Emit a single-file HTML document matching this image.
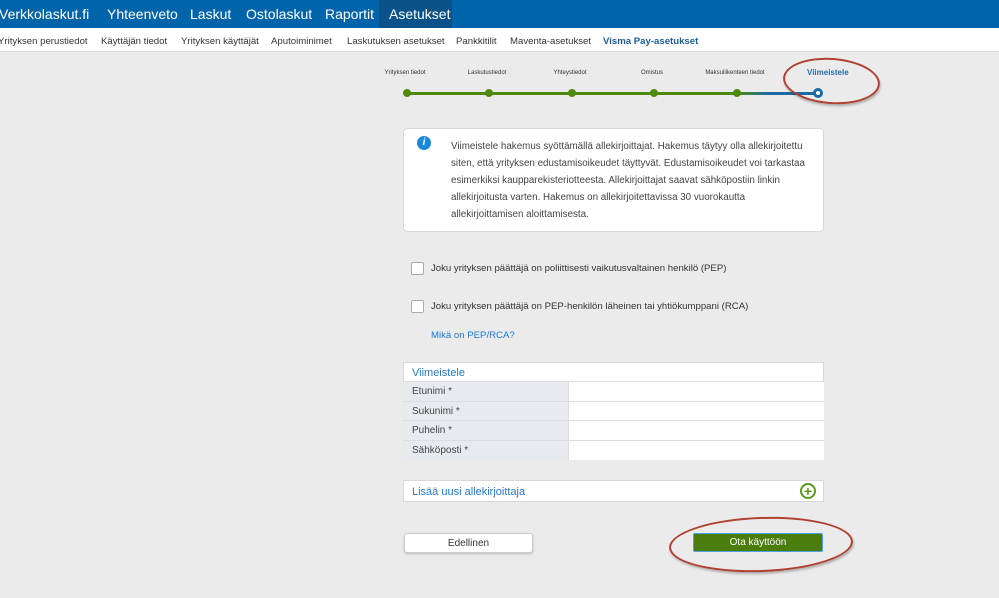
<!DOCTYPE html>
<html><head><meta charset="utf-8"><style>
*{box-sizing:border-box;margin:0;padding:0}
body{width:999px;height:598px;overflow:hidden;background:#ebebeb;font-family:"Liberation Sans",sans-serif;position:relative;color:#444}
.top{position:absolute;left:0;top:0;width:999px;height:28px;background:#0064aa}
.top span{position:absolute;top:6px;color:#fff;font-size:14px}
.act{position:absolute;left:379px;top:0;width:73px;height:28px;background:#0a5288}
.sub{position:absolute;left:0;top:28px;width:999px;height:24px;background:#fff;border-bottom:1px solid #ddd}
.sub span{position:absolute;top:8px;font-size:9.6px;color:#333;white-space:nowrap}
.lbl{position:absolute;top:70px;font-size:6px;color:#333;transform:translateX(-50%);white-space:nowrap}
.dot{position:absolute;top:89px;width:8px;height:8px;border-radius:50%;background:#4e8a0e}
.a{position:absolute;white-space:nowrap}
.box{position:absolute;background:#fff;border:1px solid #d8d8d8}
.cb{position:absolute;width:13px;height:13px;background:#fff;border:1px solid #aaa;border-radius:2px}
.t{position:absolute;font-size:9.6px;color:#333;white-space:nowrap}
.row{position:absolute;left:403px;width:421px;height:20px;border-top:1px solid #ddd}
.row .l{position:absolute;left:0;top:0;width:165px;height:19px;background:#e7eaee;font-size:10px;padding:4px 0 0 9px;color:#444}
.row .r{position:absolute;left:165px;top:0;right:0;height:19px;background:#fff;border-left:1px solid #ddd}
</style></head><body>
<div class="top"><div class="act"></div>
<span style="left:-1px">Verkkolaskut.fi</span><span style="left:107px">Yhteenveto</span><span style="left:190px">Laskut</span><span style="left:246px">Ostolaskut</span><span style="left:325px">Raportit</span><span style="left:389px">Asetukset</span></div>
<div class="sub">
<span style="left:-2px">Yrityksen perustiedot</span><span style="left:101px">Käyttäjän tiedot</span><span style="left:181px">Yrityksen käyttäjät</span><span style="left:271px">Aputoiminimet</span><span style="left:347px">Laskutuksen asetukset</span><span style="left:456px">Pankkitilit</span><span style="left:510px">Maventa-asetukset</span><span style="left:603px;color:#1a5e9a;font-weight:bold">Visma Pay-asetukset</span></div>
<div class="lbl" style="left:405px">Yrityksen tiedot</div><div class="lbl" style="left:487px">Laskutustiedot</div><div class="lbl" style="left:570px">Yhteystiedot</div><div class="lbl" style="left:652px">Omistus</div><div class="lbl" style="left:735px">Maksuliikenteen tiedot</div>
<div class="a" style="left:807px;top:68px;font-size:8px;font-weight:bold;color:#2a6ea8">Viimeistele</div>
<div class="a" style="left:407px;top:92px;width:330px;height:3px;background:#4e8a0e"></div>
<div class="a" style="left:737px;top:92px;width:81px;height:3px;background:linear-gradient(90deg,#4e8a0e,#1a6aa6 40%)"></div>
<div class="dot" style="left:403px"></div><div class="dot" style="left:485px"></div><div class="dot" style="left:568px"></div><div class="dot" style="left:650px"></div><div class="dot" style="left:733px"></div>
<div class="a" style="left:813px;top:88px;width:10px;height:10px;border-radius:50%;background:#1a6aa6"><div style="position:absolute;left:3px;top:3px;width:4px;height:4px;border-radius:50%;background:#fff"></div></div>
<div class="a" style="left:783px;top:58px;width:97px;height:46px;border:2px solid #b04030;border-radius:50%;transform:rotate(4deg);box-shadow:1px 2px 2px rgba(0,0,0,.25)"></div>
<div class="box" style="left:403px;top:128px;width:421px;height:104px;border-radius:4px"></div>
<div class="a" style="left:417px;top:136px;width:14px;height:14px;border-radius:50%;background:#1a8ad8;color:#fff;font-size:10px;font-weight:bold;text-align:center;line-height:14px;font-style:italic">i</div>
<div class="a" style="left:451px;top:138px;font-size:9.8px;line-height:17px;color:#444">Viimeistele hakemus syöttämällä allekirjoittajat. Hakemus täytyy olla allekirjoitettu<br>siten, että yrityksen edustamisoikeudet täyttyvät. Edustamisoikeudet voi tarkastaa<br>esimerkiksi kaupparekisteriotteesta. Allekirjoittajat saavat sähköpostiin linkin<br>allekirjoitusta varten. Hakemus on allekirjoitettavissa 30 vuorokautta<br>allekirjoittamisen aloittamisesta.</div>
<div class="cb" style="left:411px;top:262px"></div><div class="t" style="left:431px;top:263px">Joku yrityksen päättäjä on poliittisesti vaikutusvaltainen henkilö (PEP)</div>
<div class="cb" style="left:411px;top:300px"></div><div class="t" style="left:431px;top:301px">Joku yrityksen päättäjä on PEP-henkilön läheinen tai yhtiökumppani (RCA)</div>
<div class="t" style="left:431px;top:330px;color:#1a7ad0">Mikä on PEP/RCA?</div>
<div class="box" style="left:403px;top:362px;width:421px;height:20px;border-bottom:none"></div>
<div class="a" style="left:412px;top:367px;font-size:11px;color:#2a78c0">Viimeistele</div>
<div class="row" style="top:381px"><div class="l">Etunimi *</div><div class="r"></div></div>
<div class="row" style="top:401px"><div class="l">Sukunimi *</div><div class="r"></div></div>
<div class="row" style="top:420px"><div class="l">Puhelin *</div><div class="r"></div></div>
<div class="row" style="top:440px"><div class="l">Sähköposti *</div><div class="r"></div></div>
<div class="box" style="left:403px;top:480px;width:421px;height:22px"></div>
<div class="a" style="left:412px;top:486px;font-size:11px;color:#2a78c0">Lisää uusi allekirjoittaja</div>
<div class="a" style="left:800px;top:483px;width:16px;height:16px;border:2px solid #5a9a1e;border-radius:50%;color:#5a9a1e;font-size:14px;font-weight:bold;text-align:center;line-height:12px">+</div>
<div class="a" style="left:404px;top:533px;width:129px;height:20px;background:#fff;border:1px solid #ccc;border-radius:3px;font-size:10px;text-align:center;line-height:19px;color:#333;box-shadow:0 1px 2px rgba(0,0,0,.2)">Edellinen</div>
<div class="a" style="left:693px;top:533px;width:130px;height:19px;background:#4a7e0c;border:1px solid #4aa0e0;border-radius:2px;font-size:10px;text-align:center;line-height:18px;color:#fff">Ota käyttöön</div>
<div class="a" style="left:669px;top:517px;width:184px;height:55px;border:2px solid #b04030;border-radius:50%;transform:rotate(-2deg);box-shadow:1px 2px 2px rgba(0,0,0,.25)"></div>
</body></html>
